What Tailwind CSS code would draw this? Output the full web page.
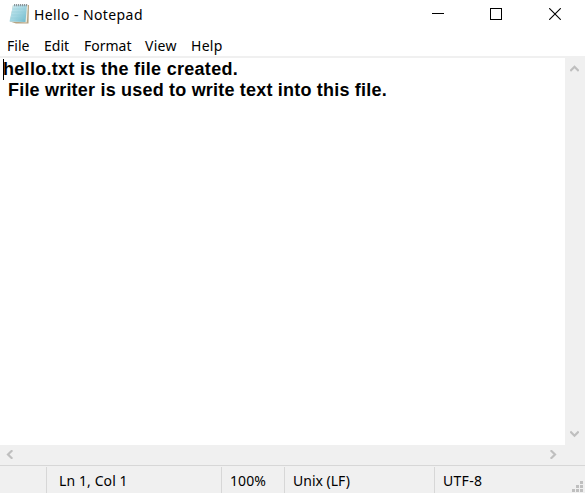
<!DOCTYPE html>
<html lang="en">
<head>
<meta charset="utf-8">
<title>Hello - Notepad</title>
<script src="https://cdn.jsdelivr.net/npm/@tailwindcss/browser@4"></script>
</head>
<body class="w-[585px] h-[493px] overflow-hidden flex flex-col bg-white text-black font-['Noto_Sans',sans-serif] text-[14px] whitespace-nowrap">
<header class="flex h-[32px] shrink-0">
  <svg class="ml-[8px] mt-[2px] shrink-0" width="23" height="24" viewBox="0 0 23 24">
    <defs><linearGradient id="p" x1="0" y1="0" x2="1" y2="1"><stop offset="0" stop-color="#d2edf2"/><stop offset=".5" stop-color="#a3d6e2"/><stop offset="1" stop-color="#6db9cb"/></linearGradient></defs>
    <path d="M5 3H21L20.500 21.500H8L2 19.500Z" fill="#b5a484"/>
    <path d="M5 3H20L18.800 20.500L2 19.500Z" fill="#f0ece0"/>
    <path d="M5 3H19L17.500 20L1.500 19.500Z" fill="url(#p)"/>
    <path d="M4.500 7H18M4 10H17.700M3.500 13H17.400M3 16H17" stroke="#8cc8d6" stroke-width=".5"/>
    <path d="M6 3.200H20" stroke="#8a959a" stroke-width="2.200" stroke-dasharray="1.2 .8"/>
  </svg>
  <h1 class="ml-[3px] w-[112px] leading-[30px] tracking-[0.4px]">Hello - Notepad</h1>
  <div class="ml-auto flex pt-[8px] pr-[24px]">
    <svg class="mr-[46px]" width="12" height="12" shape-rendering="crispEdges"><path d="M0 5.5H12" stroke="#000"/></svg>
    <svg class="mr-[47px]" width="12" height="12" shape-rendering="crispEdges"><path d="M.5 .5H11.5V11.5H.5Z" fill="none" stroke="#000"/></svg>
    <svg width="12" height="12"><path d="M.2 .2L11.8 11.8M11.8 .2L.2 11.8" stroke="#000" stroke-width="1.1"/></svg>
  </div>
</header>
<nav class="flex h-[24px] shrink-0 pl-[7px] leading-[27px]">
  <span class="w-[37px]">File</span><span class="w-[40px]">Edit</span><span class="w-[61px]">Format</span><span class="w-[46px] tracking-[0.3px]">View</span><span class="tracking-[0.3px]">Help</span>
</nav>
<main class="flex h-[389px] shrink-0 border-t-2 border-[#f0f0f0]">
  <div class="w-[565px] pt-px pl-[3px] font-['Liberation_Sans',sans-serif] font-bold text-[18px] leading-[21px]">
    <div class="flex"><i class="w-px h-[21px] bg-black -mr-px"></i><span class="tracking-[0.3px]">hello.txt is the file created.</span></div>
    <div class="pl-[5px] tracking-[0.2px]">File writer is used to write text into this file.</div>
  </div>
  <div class="w-[20px] bg-[#f0f0f0] flex flex-col justify-between items-start pl-[5px] pt-[7px] pb-[7px]">
    <svg width="9" height="8"><path d="M.3 6L4.500 1.700L8.700 6" fill="none" stroke="#bfbfbf" stroke-width="2.200"/></svg>
    <svg width="9" height="8"><path d="M.3 1.500L4.500 5.800L8.700 1.500" fill="none" stroke="#bfbfbf" stroke-width="2.200"/></svg>
  </div>
</main>
<div class="flex h-[20px] shrink-0 bg-[#f0f0f0] pt-[5px] pl-[6px] pr-[28px] justify-between">
  <svg width="8" height="9"><path d="M6.300 .3L2 4.500L6.300 8.700" fill="none" stroke="#bfbfbf" stroke-width="2.200"/></svg>
  <svg width="8" height="9"><path d="M1.700 .3L6 4.500L1.700 8.700" fill="none" stroke="#bfbfbf" stroke-width="2.200"/></svg>
</div>
<footer class="flex h-[28px] shrink-0 bg-[#f0f0f0] border-t border-[#d7d7d7] pt-px leading-[28px]">
  <div class="w-[46px]"></div>
  <div class="w-[175px] border-l border-[#d7d7d7] pl-[12px] tracking-[0.1px]">Ln 1, Col 1</div>
  <div class="w-[63px] border-l border-[#d7d7d7] pl-[8px] tracking-[0.1px]">100%</div>
  <div class="w-[150px] border-l border-[#d7d7d7] pl-[8px]">Unix (LF)</div>
  <div class="flex-1 flex justify-between items-end border-l border-[#d7d7d7] pl-[8px]"><span class="self-start tracking-[0.3px]">UTF-8</span>
    <svg class="mr-[2px] mb-px" width="11" height="11" fill="#bfbfbf"><path d="M8 0h3v3h-3zM4 4h3v3h-3zM8 4h3v3h-3zM0 8h3v3h-3zM4 8h3v3h-3zM8 8h3v3h-3z"/></svg>
  </div>
</footer>
</body>
</html>
